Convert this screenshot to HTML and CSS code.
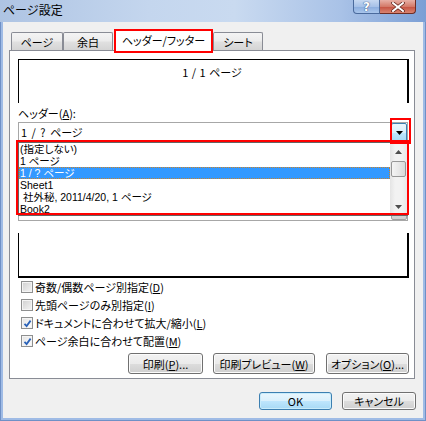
FILE: index.html
```html
<!DOCTYPE html>
<html lang="ja">
<head>
<meta charset="utf-8">
<title>ページ設定</title>
<link rel="stylesheet" href="styles.css">
</head>
<body>
<div class="window">
  <div class="titlebar">
    <span class="title">ページ設定</span>
    <div class="caption-btns">
      <div class="cbtn help">?</div>
      <div class="cbtn close">
        <svg width="14" height="10" viewBox="0 0 14 10"><path d="M2 1 L12 9 M12 1 L2 9" stroke="#5a1c14" stroke-width="3.4" stroke-linecap="square"/><path d="M2 1 L12 9 M12 1 L2 9" stroke="#fff" stroke-width="2" stroke-linecap="square"/></svg>
      </div>
    </div>
  </div>
  <div class="client">
    <div class="tabs">
      <div class="tab t1">ページ</div>
      <div class="tab t2">余白</div>
      <div class="tab sel">ヘッダー/フッター</div>
      <div class="tab t4">シート</div>
    </div>
    <div class="panel">
      <div class="preview preview-top">1 / 1 ページ</div>
      <div class="label">ヘッダー(<u>A</u>):</div>
      <div class="combo-wrap">
        <div class="combo">
          <span class="combo-text">1 / ? ページ</span>
          <span class="drop hot"><svg width="7" height="4" viewBox="0 0 7 4"><polygon points="0,0 7,0 3.5,4" fill="#000"/></svg></span>
        </div>
        <div class="popup">
          <div class="items">
            <div class="item">(指定しない)</div>
            <div class="item">1 ページ</div>
            <div class="item selected">1 / ? ページ</div>
            <div class="item">Sheet1</div>
            <div class="item"> 社外秘, 2011/4/20, 1 ページ</div>
            <div class="item">Book2</div>
          </div>
          <div class="vscroll">
            <div class="sarrow"><svg width="7" height="4" viewBox="0 0 7 4"><polygon points="0,4 7,4 3.5,0" fill="#4d4d4d"/></svg></div>
            <div class="thumb"></div>
            <div class="strack"></div>
            <div class="sarrow"><svg width="7" height="4" viewBox="0 0 7 4"><polygon points="0,0 7,0 3.5,4" fill="#4d4d4d"/></svg></div>
          </div>
        </div>
      </div>
      <div class="combo footer-combo">
        <span class="drop"><svg width="7" height="4" viewBox="0 0 7 4"><polygon points="0,0 7,0 3.5,4" fill="#000"/></svg></span>
      </div>
      <div class="preview preview-bottom"></div>
      <div class="checks">
        <div class="check"><span class="box"></span><span>奇数/偶数ページ別指定(<u>D</u>)</span></div>
        <div class="check"><span class="box"></span><span>先頭ページのみ別指定(<u>I</u>)</span></div>
        <div class="check"><span class="box checked"><svg width="9" height="9" viewBox="0 0 9 9"><path d="M1.5 4.8 L3.6 7 L7.6 1.6" fill="none" stroke="#2a62b8" stroke-width="1.8"/></svg></span><span>ドキュメントに合わせて拡大/縮小(<u>L</u>)</span></div>
        <div class="check"><span class="box checked"><svg width="9" height="9" viewBox="0 0 9 9"><path d="M1.5 4.8 L3.6 7 L7.6 1.6" fill="none" stroke="#2a62b8" stroke-width="1.8"/></svg></span><span>ページ余白に合わせて配置(<u>M</u>)</span></div>
      </div>
      <div class="btn-row">
        <div class="btn b-print">印刷(<u>P</u>)...</div>
        <div class="btn b-preview">印刷プレビュー(<u>W</u>)</div>
        <div class="btn b-option">オプション(<u>O</u>)...</div>
      </div>
    </div>
    <div class="dialog-btns">
      <div class="btn default b-ok">OK</div>
      <div class="btn b-cancel">キャンセル</div>
    </div>
  </div>
  <div class="ann ann-tab"></div>
  <div class="ann ann-btn"></div>
  <div class="ann ann-list"></div>
</div>
</body>
</html>
```
FILE: styles.css
```css
* { box-sizing: border-box; }
html, body { margin: 0; padding: 0; }
body {
  width: 426px;
  height: 421px;
  overflow: hidden;
  background: #ffffff;
  font-family: "Noto Sans CJK JP", "Noto Sans", sans-serif;
  font-size: 11px;
  color: #000;
  font-feature-settings: "palt";
}
u { text-decoration: underline; text-underline-offset: 1px; }

.window {
  position: relative;
  width: 426px;
  height: 421px;
  display: flex;
  flex-direction: column;
  background: #9fbbe5;
  box-shadow: inset 1px 0 #6f90c6, inset -1px 0 #6f90c6, inset 0 -1px #6f90c6;
}

.titlebar {
  height: 22px;
  display: flex;
  align-items: flex-start;
  padding-right: 10px;
  background: linear-gradient(to right, #aec4e3 0%, #c4d6ee 35%, #c9daf0 55%, #a9c2e7 80%, #7b9fd5 100%);
}
.title {
  padding-left: 3px;
  line-height: 19px;
  font-size: 12px;
  font-feature-settings: normal;
  color: #000;
}
.caption-btns {
  margin-left: auto;
  display: flex;
}
.cbtn {
  height: 14px;
  display: flex;
  align-items: center;
  justify-content: center;
  border: 1px solid #4a6a9c;
  border-top: none;
}
.help {
  width: 27px;
  border-bottom-left-radius: 4px;
  background: linear-gradient(#c6d8f1 0%, #a7c2e8 50%, #8aacdd 51%, #a9c6ec 100%);
  color: #fff;
  font-family: "DejaVu Sans", sans-serif;
  font-weight: bold;
  font-size: 12px;
  line-height: 1;
  text-shadow: 0 0 1px #2c4a7c, 0 0 1px #2c4a7c;
}
.close {
  width: 36px;
  border-color: #6e2d24;
  border-left: none;
  border-bottom-right-radius: 4px;
  background: linear-gradient(#e8b0a6 0%, #d47a69 50%, #c5503f 51%, #d98470 100%);
}

.client {
  flex: 1;
  margin: 0 3px 3px 3px;
  background: #f0f0f0;
  padding: 7px 8px 0 6px;
  display: flex;
  flex-direction: column;
}

.tabs {
  position: relative;
  z-index: 1;
  height: 21px;
  display: flex;
  align-items: flex-end;
  padding-left: 2px;
}
.tab {
  height: 18px;
  border: 1px solid #898c95;
  border-bottom: none;
  border-radius: 2px 2px 0 0;
  background: linear-gradient(#f4f4f4 0%, #ececec 45%, #e0e0e0 55%, #d4d4d4 100%);
  display: flex;
  align-items: center;
  justify-content: center;
  white-space: nowrap;
}
.t1 { width: 52px; }
.t2 { width: 50px; }
.sel {
  width: 99px;
  height: 22px;
  margin-left: 1px;
  margin-bottom: -1px;
  padding-bottom: 2px;
  background: #ffffff;
}
.t4 { width: 50px; }

.panel {
  width: 406px;
  height: 329px;
  border: 1px solid #898c95;
  background: #ffffff;
  padding: 8px 5px 0 8px;
  display: flex;
  flex-direction: column;
}

.preview {
  width: 391px;
  border-color: #000;
  border-style: solid;
}
.preview-top {
  height: 44px;
  border-width: 1px 2px 0 1px;
  text-align: center;
  line-height: 16px;
  padding-top: 4px;
  padding-right: 2px;
  word-spacing: 1px;
}
.preview-bottom {
  height: 45px;
  margin-top: 12px;
  border-width: 0 2px 2px 1px;
}

.label {
  margin-top: 2px;
  height: 16px;
  line-height: 16px;
}

.combo-wrap {
  position: relative;
  z-index: 2;
  margin-top: 1px;
  width: 390px;
  height: 21px;
}
.combo {
  position: relative;
  width: 390px;
  height: 21px;
  border: 1px solid #a7a7a7;
  background: #fff;
  padding-left: 2px;
  line-height: 19px;
}
.combo-text { word-spacing: 2px; }
.drop {
  position: absolute;
  right: 0;
  top: 0;
  width: 16px;
  height: 19px;
  display: flex;
  align-items: center;
  justify-content: center;
  border: 1px solid #a0a0a0;
  border-radius: 2px;
  background: linear-gradient(#f2f2f2 0%, #ebebeb 50%, #dddddd 51%, #cfcfcf 100%);
}
.drop.hot {
  border-color: #3c7fb1;
  background: linear-gradient(#eaf6fd 0%, #d9f0fc 50%, #bee6fd 51%, #a7d9f5 100%);
}
.footer-combo { margin-top: 57px; }

.popup {
  position: absolute;
  left: 0;
  top: 20px;
  width: 390px;
  height: 74px;
  border: 1px solid #646464;
  background: #fff;
  display: flex;
}
.items {
  flex: 1;
  font-family: "Liberation Sans", "Noto Sans CJK JP", sans-serif;
  font-size: 10.5px;
}
.item {
  height: 12px;
  line-height: 10px;
  padding-top: 1px;
  padding-left: 1px;
  white-space: pre;
}
.item.selected {
  background: #3399ff;
  color: #fff;
  outline: 1px dotted #c8822c;
  outline-offset: -1px;
}
.vscroll {
  width: 17px;
  display: flex;
  flex-direction: column;
  background: linear-gradient(to right, #e4e4e4 0%, #f2f2f2 30%, #f2f2f2 70%, #e8e8e8 100%);
}
.sarrow {
  height: 17px;
  display: flex;
  align-items: center;
  justify-content: center;
}
.thumb {
  height: 16px;
  margin: 1px 1px 0 1px;
  border: 1px solid #979797;
  border-radius: 2px;
  background: linear-gradient(to right, #f4f4f4 0%, #e8e8e8 50%, #d9d9d9 100%);
}
.strack { flex: 1; }

.checks {
  display: flex;
  flex-direction: column;
}
.check {
  height: 18px;
  display: flex;
  align-items: center;
}
.box {
  width: 12px;
  height: 12px;
  margin-left: 3px;
  margin-right: 2px;
  border: 1px solid #8e8f8f;
  background: linear-gradient(135deg, #cfcfcf 0%, #e6e6e6 60%, #f4f4f4 100%);
  box-shadow: inset 0 0 0 1px #f4f4f4;
  display: flex;
  align-items: center;
  justify-content: center;
}
.box.checked {
  background: linear-gradient(135deg, #e2e2e2 0%, #f6f6f6 70%, #ffffff 100%);
}

.btn-row {
  margin-top: 3px;
  display: flex;
  justify-content: flex-end;
}
.btn {
  height: 21px;
  border: 1px solid #707070;
  border-radius: 3px;
  background: linear-gradient(#f2f2f2 0%, #ebebeb 50%, #dddddd 51%, #cfcfcf 100%);
  box-shadow: inset 0 0 0 1px #fbfbfb;
  display: flex;
  align-items: center;
  justify-content: center;
  white-space: nowrap;
}
.b-print { width: 75px; }
.b-preview { width: 102px; margin-left: 10px; }
.b-option { width: 83px; margin-left: 11px; }

.dialog-btns {
  margin-top: 13px;
  margin-right: -1px;
  display: flex;
  justify-content: flex-end;
}
.dialog-btns .btn { height: 18px; }
.b-ok { width: 73px; }
.b-cancel { width: 74px; margin-left: 10px; }
.btn.default {
  border-color: #3c7fb1;
  background: linear-gradient(#eaf6fd 0%, #d9f0fc 50%, #bee6fd 51%, #a7d9f5 100%);
  box-shadow: inset 0 0 0 1px #c9ecfb;
}

.ann {
  position: absolute;
  border: 2px solid #ff0000;
  z-index: 10;
  pointer-events: none;
}
.ann-tab { left: 114px; top: 29px; width: 99px; height: 24px; }
.ann-btn { left: 390px; top: 118px; width: 21px; height: 26px; }
.ann-list { left: 16px; top: 140px; width: 393px; height: 75px; }
```
